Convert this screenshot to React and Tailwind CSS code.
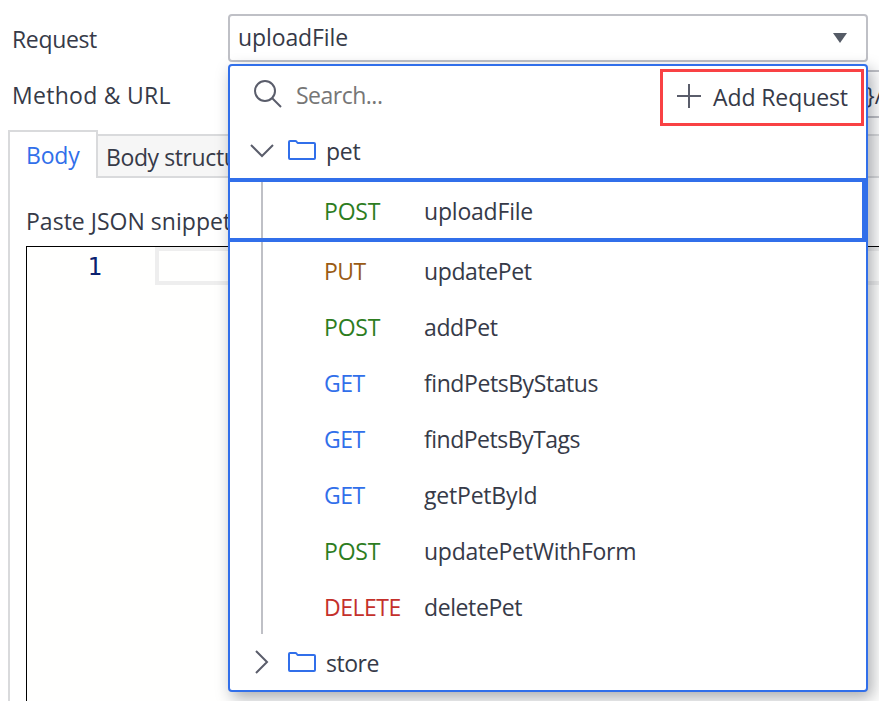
import React from "react";

const ITEMS = [
  { method: "PUT", name: "updatePet", color: "text-[#9a5b14]", mt: "tracking-[-0.5px]", nt: "tracking-[-0.4px]" },
  { method: "POST", name: "addPet", color: "text-[#2d7d1f]", mt: "tracking-[-0.2px]", nt: "tracking-[-0.4px]" },
  { method: "GET", name: "findPetsByStatus", color: "text-[#316fea]", mt: "tracking-[-0.5px]", nt: "tracking-[-0.43px]" },
  { method: "GET", name: "findPetsByTags", color: "text-[#316fea]", mt: "tracking-[-0.5px]", nt: "tracking-[-0.5px]" },
  { method: "GET", name: "getPetById", color: "text-[#316fea]", mt: "tracking-[-0.5px]", nt: "tracking-[-0.2px]" },
  { method: "POST", name: "updatePetWithForm", color: "text-[#2d7d1f]", mt: "tracking-[-0.2px]", nt: "tracking-[-0.27px]" },
  { method: "DELETE", name: "deletePet", color: "text-[#c4302b]", mt: "tracking-[-0.5px]", nt: "tracking-[-0.4px]" },
];

function Folder() {
  return (
    <svg className="block shrink-0" width="28" height="20" viewBox="0 0 28 20" fill="none" stroke="#316fea" strokeWidth="2" strokeLinejoin="round">
      <path d="M1 18V2q0-1 1-1h5.500q1 0 1.300 1l.8 1H26q1 0 1 1v14q0 1-1 1H2q-1 0-1-1z" />
    </svg>
  );
}

function Dropdown() {
  return (
    <div className="absolute left-[228px] top-[64px] h-[628px] w-[640px] rounded-[4px] border-2 border-[#316fea] bg-white shadow-[4px_6px_16px_rgba(20,24,40,0.36)]">
      <div className="flex h-14 pl-[23px]">
        <svg className="mt-[13px] shrink-0" width="30" height="30" viewBox="0 0 30 30" fill="none" stroke="#5a5d6b" strokeWidth="2">
          <circle cx="12" cy="12" r="10" />
          <path d="M19 19l9 9" />
        </svg>
        <span className="ml-[13px] mt-[13px] leading-8 tracking-[-0.5px] text-[#767676]">Search...</span>
        <div className="ml-auto mr-[2px] mt-[3px] flex h-[57px] w-[204px] border-[3px] border-[#f94144] pl-[14px]">
          <svg className="mt-3 shrink-0" width="24" height="24" viewBox="0 0 24 24" stroke="#5a5d6b" strokeWidth="2">
            <path d="M0 12h24M12 0v24" />
          </svg>
          <span className="ml-3 mt-[9px] leading-8 tracking-[-0.1px]">Add Request</span>
        </div>
      </div>
      <div className="flex h-14 pl-5">
        <svg className="mt-[21px] shrink-0" width="24" height="15" viewBox="0 0 24 15" fill="none" stroke="#5a5d6b" strokeWidth="2">
          <path d="M1 2l11 11L23 2" />
        </svg>
        <div className="ml-[14px] mt-[18px]"><Folder /></div>
        <span className="ml-[10px] mt-[13px] leading-8 tracking-[-0.2px]">pet</span>
      </div>
      <div className="flex h-16 border-y-4 border-r-4 border-[#316fea] pl-[31px]">
        <div className="w-[2px] bg-[#bfc0c6]" />
        <span className="ml-[61px] mt-[13px] w-[100px] leading-8 tracking-[-0.2px] text-[#2d7d1f]">POST</span>
        <span className="mt-[13px] leading-8 tracking-[-0.2px]">uploadFile</span>
      </div>
      <div className="ml-[31px] border-l-2 border-[#bfc0c6]">
        {ITEMS.map((it) => (
          <div key={it.name} className="flex h-14 pl-[61px] pt-[13px] leading-8">
            <span className={"w-[100px] " + it.color + " " + it.mt}>{it.method}</span>
            <span className={it.nt}>{it.name}</span>
          </div>
        ))}
      </div>
      <div className="flex h-14 pl-5">
        <svg className="ml-[4px] mt-4 shrink-0" width="15" height="24" viewBox="0 0 15 24" fill="none" stroke="#5a5d6b" strokeWidth="2">
          <path d="M2 1l11 11L2 23" />
        </svg>
        <div className="ml-[19px] mt-[18px]"><Folder /></div>
        <span className="ml-[10px] mt-[13px] leading-8 tracking-[-0.5px]">store</span>
      </div>
    </div>
  );
}

export default function App() {
  return (
    <div className="relative h-[701px] w-[879px] overflow-hidden whitespace-nowrap bg-white font-['Open_Sans','Noto_Sans',sans-serif] text-[23px] text-[#363a48]">
      <div className="flex h-[62px] pl-3 pt-[14px]">
        <span className="mt-[9px] w-[216px] shrink-0 leading-8 tracking-[-0.35px]">Request</span>
        <div className="flex h-12 w-[640px] shrink-0 justify-between rounded-[4px] border-2 border-[#bfc0c6] pl-2 pr-[19px]">
          <span className="mt-[5px] leading-8 tracking-[-0.1px]">uploadFile</span>
          <svg className="mt-[17px]" width="14" height="10" viewBox="0 0 14 10" fill="#555b66"><path d="M0 0h14L7 10z" /></svg>
        </div>
      </div>
      <div className="flex h-[68px] pl-3 pt-2">
        <span className="mt-[9px] w-[216px] shrink-0 leading-8 tracking-[0.28px]">Method &amp; URL</span>
        <div className="flex h-12 w-[700px] shrink-0 border-y-2 border-l-2 border-[#bfc0c6] pl-[636px]">
          <span className="mt-[7px] leading-8">{"}"}/</span>
        </div>
      </div>
      <div className="ml-2 flex h-12 items-stretch">
        <div className="w-[90px] border-x-2 border-t-2 border-[#d9dadc] pl-4 pt-[7px] leading-8 tracking-[-0.2px] text-[#316fea]">Body</div>
        <div className="mt-1 flex-1 border-y-2 border-[#d9dadc] bg-[#f6f6f6] pl-2 pt-[5px] leading-8 tracking-[-0.4px]">Body structure</div>
      </div>
      <div className="ml-2 h-[523px] border-l-2 border-[#d9dadc] pl-4 pt-[27px]">
        <div className="h-[41px] leading-8 tracking-[0.02px]">Paste JSON snippet</div>
        <div className="flex h-[460px] border-l border-t border-black bg-[#fffffe]">
          <span className="w-[75px] pt-[4px] text-right font-['DejaVu_Sans_Mono',monospace] text-[24px] leading-8 text-[#0b216f]">1</span>
          <div className="ml-[53px] h-[38px] flex-1 border-y-4 border-l-4 border-[#eeeeee]" />
        </div>
      </div>
      <Dropdown />
    </div>
  );
}
